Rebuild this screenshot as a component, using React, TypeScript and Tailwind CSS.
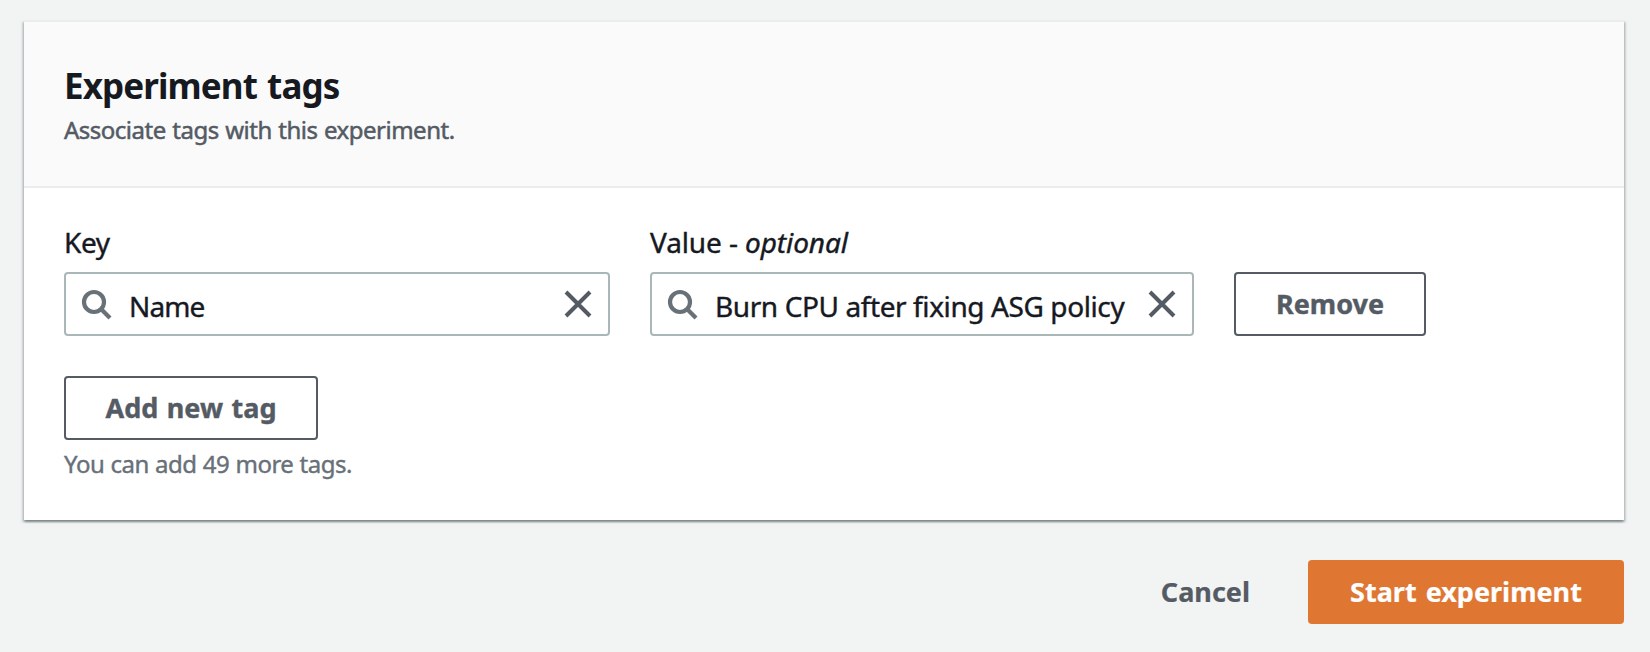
function SearchIcon() {
  return (
    <svg viewBox="0 0 32 32" className="size-8 shrink-0" fill="none" stroke="#687078" strokeWidth="4.2">
      <circle cx="14" cy="14" r="10" />
      <path d="M21 21l9 9" />
    </svg>
  );
}

function CloseIcon() {
  return (
    <svg viewBox="0 0 32 32" className="size-8 shrink-0" fill="none" stroke="#545b64" strokeWidth="4">
      <path d="M4 4l24 24M28 4L4 28" />
    </svg>
  );
}

function SearchField({ value, className, textClass }: { value: string; className: string; textClass: string }) {
  return (
    <div className={`flex h-16 items-center rounded-[4px] border-2 border-[#aab7b8] bg-white pl-[14px] pr-[14px] ${className}`}>
      <SearchIcon />
      <span className={`grow whitespace-nowrap pt-1 text-[28px] leading-10 text-[#16191f] ${textClass}`}>{value}</span>
      <CloseIcon />
    </div>
  );
}

const outlined =
  "flex h-16 items-center justify-center whitespace-nowrap rounded-[4px] border-2 border-[#545b64] bg-white text-[27px] font-bold leading-10 text-[#545b64]";

export default function App() {
  return (
    <div className="h-[652px] w-[1650px] overflow-hidden bg-[#f2f3f3] pl-[24px] pr-[26px] pt-[20px] font-['Noto_Sans',sans-serif] text-[#16191f]">
      <section className="h-[500px] border-t-2 border-[#eaeded] bg-white shadow-[0_2px_2px_0_rgba(0,28,36,0.3),2px_2px_2px_0_rgba(0,28,36,0.15),-2px_2px_2px_0_rgba(0,28,36,0.15)]">
        <header className="h-[166px] border-b-2 border-[#eaeded] bg-[#fafafa] px-10 pt-10">
          <h2 className="text-[35px] font-bold leading-[48px] tracking-[-0.9px] [word-spacing:2px]">Experiment tags</h2>
          <p className="text-[24px] leading-[40px] tracking-[-0.5px] text-[#545b64] [-webkit-text-stroke:0.5px] [word-spacing:0.8px]">
            Associate tags with this experiment.
          </p>
        </header>
        <div className="px-10 pt-[34px] [-webkit-text-stroke:0.4px]">
          <div className="flex items-end gap-10">
            <label className="flex flex-col gap-[10px]">
              <span className="text-[28px] leading-10 tracking-[-0.4px]">Key</span>
              <SearchField value="Name" className="w-[546px]" textClass="ml-[17px] tracking-[-0.9px]" />
            </label>
            <label className="flex flex-col gap-[10px]">
              <span className="text-[28px] leading-10 tracking-[-0.1px]">
                Value - <i>optional</i>
              </span>
              <SearchField value="Burn CPU after fixing ASG policy" className="w-[544px]" textClass="ml-[17px] tracking-[-0.4px]" />
            </label>
            <button className={`${outlined} w-[192px]`}>Remove</button>
          </div>
          <button className={`${outlined} mt-10 w-[254px] [word-spacing:1.5px]`}>Add new tag</button>
          <p className="mt-1 text-[24px] leading-10 tracking-[-0.5px] text-[#687078] [word-spacing:0.5px]">You can add 49 more tags.</p>
        </div>
      </section>
      <footer className="mt-10 flex justify-end gap-[58px] text-[27px] font-bold [-webkit-text-stroke:0.2px]">
        <button className="h-16 text-[#545b64]">Cancel</button>
        <button className="h-16 w-[316px] rounded-[4px] bg-[#df7733] text-white [word-spacing:2px]">Start experiment</button>
      </footer>
    </div>
  );
}
